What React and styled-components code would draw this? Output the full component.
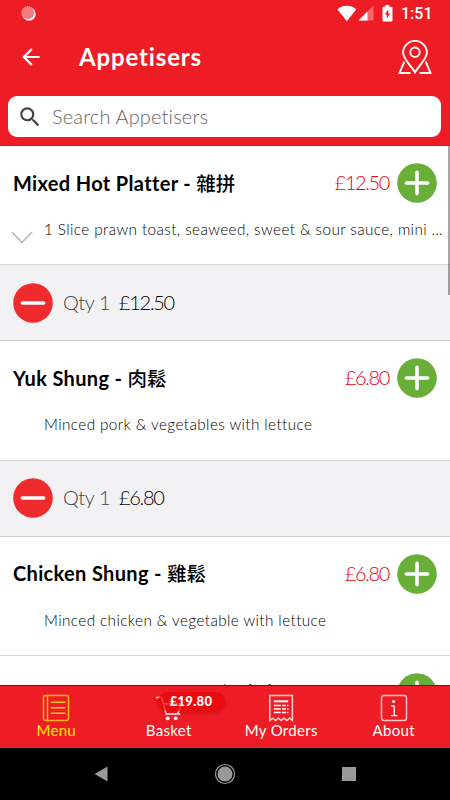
import React from 'react'
import styled, { createGlobalStyle } from 'styled-components'
import { MdArrowBack, MdSearch } from 'react-icons/md'

const GlobalStyle = createGlobalStyle`
  * {
    box-sizing: border-box;
  }
  body {
    margin: 0;
    background: #fff;
    font-family: Lato, 'Noto Sans CJK TC', sans-serif;
    overflow: hidden;
  }
  button {
    font: inherit;
    border: none;
    padding: 0;
    background: none;
    cursor: pointer;
  }
  svg {
    display: block;
    flex: none;
  }
`;

const Screen = styled.div`
  width: 450px;
  height: 800px;
  display: flex;
  flex-direction: column;
  overflow: hidden;
  color: #000;
`;

const Header = styled.header`
  flex: none;
  height: 146px;
  background: #ee1c25;
  border-bottom: 1px solid #f20d12;
  color: #fff;
`;

const StatusBar = styled.div`
  height: 27px;
  padding: 0 18px 0 21px;
  display: flex;
  align-items: center;
`;

const StatusIcons = styled.div`
  margin-left: auto;
  display: flex;
  align-items: center;
`;

const SignalGroup = styled.div`
  margin-right: 8px;
  display: flex;
`;

const Clock = styled.span`
  margin-left: 8px;
  width: 31px;
  font: 500 16px/27px Roboto, sans-serif;
  white-space: nowrap;
`;

const TitleBar = styled.div`
  height: 69px;
  padding: 0 18px 9px 18px;
  display: flex;
  align-items: center;
`;

const Title = styled.h1`
  margin: 0 auto 0 35px;
  font-size: 24px;
  font-weight: 700;
  line-height: 30px;
  letter-spacing: 0.85px;
`;

const SearchBox = styled.label`
  height: 41px;
  margin: 0 9px 0 8px;
  padding-left: 9px;
  border-radius: 9px;
  background: #fff;
  color: #444;
  display: flex;
  align-items: center;
`;

const SearchInput = styled.input`
  flex: 1;
  margin: 0 0 2px 9px;
  padding: 0;
  border: none;
  outline: none;
  background: none;
  font: 300 20px/26px Lato, sans-serif;
  letter-spacing: 0.15px;
  &::placeholder {
    color: #666;
    opacity: 1;
  }
`;

const List = styled.main`
  flex: 1;
  min-height: 0;
  overflow: hidden;
  position: relative;
  border-bottom: 1px solid #17343b;
`;

const ScrollThumb = styled.div`
  position: absolute;
  top: 0;
  right: 0;
  width: 2px;
  height: 149px;
  background: rgba(0, 0, 0, 0.35);
`;

const Dish = styled.section`
  height: 119.2px;
  border-bottom: 1px solid #d5d5d7;
  background: #fff;
`;

const DishTop = styled.div`
  height: 74px;
  padding: 0 13px;
  display: flex;
  align-items: center;
`;

const DishName = styled.h2`
  margin: 0 0 1px;
  font-size: 20px;
  font-weight: 700;
  line-height: 30px;
  white-space: nowrap;
  letter-spacing: ${p => p.$spacing}px;
`;

const Chinese = styled.span`
  font-family: 'Noto Sans CJK TC', sans-serif;
  font-size: 19.5px;
  font-weight: 500;
  letter-spacing: 0;
`;

const Price = styled.span`
  margin: 0 8px 2px auto;
  font-size: 20px;
  font-weight: 300;
  letter-spacing: -1.4px;
  color: #e8000b;
`;

const DishInfo = styled.div`
  height: 22px;
  padding: 0 0 0 11px;
  display: flex;
`;

const Toggle = styled.div`
  width: 33px;
  padding-top: 11px;
`;

const Description = styled.p`
  flex: 1;
  margin: -2px 0 0;
  font-size: 15.3px;
  font-weight: 300;
  line-height: 22px;
  white-space: nowrap;
  letter-spacing: ${p => p.$spacing}px;
`;

const QtyRow = styled.div`
  height: 76.3px;
  padding: 0 13px;
  background: #f2f2f4;
  border-bottom: 1px solid #d0d0d2;
  display: flex;
  align-items: center;
  font-size: 20px;
  font-weight: 300;
`;

const Qty = styled.span`
  margin: 0 0 2px 10px;
  width: 56px;
  color: #444;
  letter-spacing: -0.4px;
`;

const Amount = styled.span`
  margin-bottom: 2px;
  letter-spacing: -1.3px;
`;

const TabBar = styled.nav`
  flex: none;
  height: 62px;
  background: #ee1c25;
  display: grid;
  grid-template-columns: repeat(4, 1fr);
`;

const Tab = styled.button`
  position: relative;
  padding-top: 8px;
  display: flex;
  flex-direction: column;
  align-items: center;
  color: ${p => (p.$active ? '#ffe800' : '#fff')};
`;

const TabLabel = styled.span`
  margin-top: -2px;
  font-size: 15px;
  line-height: 20px;
  letter-spacing: 0.3px;
`;

const Total = styled.span`
  position: absolute;
  top: 6px;
  left: 45px;
  width: 67px;
  height: 19px;
  border-radius: 10px;
  background: rgba(232, 5, 10, 0.75);
  box-shadow: 0 2px 4px rgba(130, 0, 0, 0.3);
  color: #fff;
  font-size: 13px;
  font-weight: 900;
  line-height: 18px;
  text-align: center;
  letter-spacing: 0.3px;
`;

const SystemBar = styled.div`
  flex: none;
  height: 52px;
  padding-bottom: 1px;
  background: #000;
  display: flex;
  justify-content: center;
  align-items: center;
  gap: 106px;
`;

const SyncIcon = () => (
  <svg width="15" height="16" viewBox="0 0 15 16">
    <circle cx="8" cy="8" r="6.7" fill="#fff" />
    <circle cx="7" cy="6.8" r="6.3" fill="#f57a80" stroke="#fbc0c2" strokeDasharray="1 1" />
  </svg>
)

const WifiIcon = () => (
  <svg width="20" height="17" viewBox="0 0 20 17">
    <path d="M.3 4.2Q4.5.8 9.8.8t9.5 3.4L9.8 16.2z" fill="#fff" />
  </svg>
)

const SignalIcon = () => (
  <svg width="17" height="16" viewBox="-1 0 17 16">
    <path d="M.5 15.5 15.5.5v15z" fill="#f7656c" />
    <path d="M.5 15.5 9.5 6.5v9z" fill="#fff" />
  </svg>
)

const BatteryIcon = () => (
  <svg width="11" height="17" viewBox="0 0 11 17">
    <path d="M3.2 0h4v1.7h2.1q1.2 0 1.2 1.2v12.4q0 1.2-1.2 1.2H1.7q-1.2 0-1.2-1.2V2.9q0-1.2 1.2-1.2h1.5z" fill="#fff" />
    <path d="M6.3 4.3 2.8 9.4h2v4.1l3.4-5.1h-2z" fill="#ee1c25" />
  </svg>
)

const PinIcon = () => (
  <svg width="34" height="35" viewBox="0 0 34 35" fill="none" stroke="#fff" strokeWidth="1.9">
    <path d="M17 32.2C14.2 27 5.1 19.1 5.1 12.8a11.9 11.9 0 0 1 23.8 0C28.9 19.1 19.8 27 17 32.2z" />
    <circle cx="17" cy="12.2" r="4.7" />
    <path d="M6.3 21.7 1.5 33h11M27.7 21.7 32.5 33h-11" />
  </svg>
)

const RoundButton = ({ color, plus, label }) => (
  <button aria-label={label}>
    <svg width="40" height="40" viewBox="0 0 40 40">
      <circle cx="20" cy="20" r="19.8" fill={color} />
      <path
        d={plus ? 'M9.4 20h21.2M20 9.4v21.2' : 'M9.4 20h21.2'}
        stroke="#fff"
        strokeWidth="3.6"
        strokeLinecap="round"
      />
    </svg>
  </button>
)

const Chevron = () => (
  <svg width="22" height="13" viewBox="0 0 22 13" fill="none" stroke="#bbb" strokeWidth="1.8">
    <path d="M1 1 11 11.5 21 1" />
  </svg>
)

const MenuIcon = () => (
  <svg width="28" height="28" viewBox="0 0 28 28" fill="none" stroke="#ffb516" strokeWidth="1.5">
    <rect x="1.5" y="1.5" width="25" height="25" rx="2" />
    <path d="M5.5 1.5v25" />
    <path d="M9.3 8.3h13.6M9.3 13.8h13.6M9.3 19.3h13.6" stroke="#ffd000" strokeLinecap="round" />
  </svg>
)

const BasketIcon = () => (
  <svg width="28" height="28" viewBox="0 0 28 28" fill="none" stroke="#fff" strokeWidth="1.5">
    <path d="M1.2 3.5h5.6l4.4 16.6h14M8.5 9.8h17.9l-3.8 10.3" />
    <circle cx="12.7" cy="24.3" r="1.9" fill="#fff" stroke="none" />
    <circle cx="20.7" cy="24.3" r="1.9" fill="#fff" stroke="none" />
  </svg>
)

const OrdersIcon = () => (
  <svg width="28" height="28" viewBox="0 0 28 28" fill="none" stroke="#ffd0d0" strokeWidth="1.5">
    <path d="M2.8 26.5V1.5h22.6v25l-2.8-2.4-2.8 2.4-2.8-2.4-2.8 2.4-2.8-2.4-2.8 2.4-2.8-2.4z" />
    <path d="M6.8 7.3h14.4" stroke="#fff" strokeWidth="2" />
    <path d="M6.8 11.5h7M6.8 15h7M6.8 18.5h7M15 11.5h4M15 15h4M15 18.5h4M20 11.5h1.5M20 15h1.5M20 18.5h1.5" stroke="#fff" />
  </svg>
)

const AboutIcon = () => (
  <svg width="28" height="28" viewBox="0 0 28 28" fill="none" stroke="#ffc4c6" strokeWidth="1.5">
    <rect x="1.5" y="1.5" width="25" height="25" rx="2.5" />
    <circle cx="13.7" cy="7.5" r="1.5" fill="#fff" stroke="none" />
    <path d="M11.3 12h2.9v9.5M10.8 21.7h6.6" stroke="#fff" strokeWidth="1.3" />
  </svg>
)

const dishes = [
  {
    name: 'Mixed Hot Platter - ',
    chinese: '雜拼',
    price: '£12.50',
    info: '1 Slice prawn toast, seaweed, sweet & sour sauce, mini …',
    more: true,
    qty: 1,
    spacing: 0.34,
    infoSpacing: 0.4
  },
  {
    name: 'Yuk Shung - ',
    chinese: '肉鬆',
    price: '£6.80',
    info: 'Minced pork & vegetables with lettuce',
    qty: 1,
    spacing: 0.34,
    infoSpacing: 0.4
  },
  {
    name: 'Chicken Shung - ',
    chinese: '雞鬆',
    price: '£6.80',
    info: 'Minced chicken & vegetable with lettuce',
    spacing: 0.34,
    infoSpacing: 0.4
  },
  {
    name: 'Vegetarian Yuk Shung - ',
    chinese: '煙肉串',
    price: '£6.80',
    spacing: -0.1
  }
]

const tabs = [
  { label: 'Menu', icon: <MenuIcon />, active: true },
  { label: 'Basket', icon: <BasketIcon />, total: '£19.80' },
  { label: 'My Orders', icon: <OrdersIcon /> },
  { label: 'About', icon: <AboutIcon /> }
]

export default function App() {
  return (
    <Screen>
      <GlobalStyle />
      <Header>
        <StatusBar>
          <SyncIcon />
          <StatusIcons>
            <SignalGroup>
              <WifiIcon />
              <SignalIcon />
            </SignalGroup>
            <BatteryIcon />
            <Clock>1:51</Clock>
          </StatusIcons>
        </StatusBar>
        <TitleBar>
          <MdArrowBack size={26} />
          <Title>Appetisers</Title>
          <PinIcon />
        </TitleBar>
        <SearchBox>
          <MdSearch size={26} />
          <SearchInput placeholder="Search Appetisers" />
        </SearchBox>
      </Header>
      <List>
        {dishes.map(dish => (
          <React.Fragment key={dish.name}>
            <Dish>
              <DishTop>
                <DishName $spacing={dish.spacing}>
                  {dish.name}
                  <Chinese>{dish.chinese}</Chinese>
                </DishName>
                <Price>{dish.price}</Price>
                <RoundButton plus color="#68ae38" label="Add" />
              </DishTop>
              <DishInfo>
                <Toggle>{dish.more && <Chevron />}</Toggle>
                <Description $spacing={dish.infoSpacing}>{dish.info}</Description>
              </DishInfo>
            </Dish>
            {dish.qty && (
              <QtyRow>
                <RoundButton color="#f02b2e" label="Remove" />
                <Qty>Qty {dish.qty}</Qty>
                <Amount>{dish.price}</Amount>
              </QtyRow>
            )}
          </React.Fragment>
        ))}
        <ScrollThumb />
      </List>
      <TabBar>
        {tabs.map(tab => (
          <Tab key={tab.label} $active={tab.active}>
            {tab.icon}
            <TabLabel>{tab.label}</TabLabel>
            {tab.total && <Total>{tab.total}</Total>}
          </Tab>
        ))}
      </TabBar>
      <SystemBar>
        <svg width="14" height="16" viewBox="0 0 14 16">
          <path d="M.5 8 13.5.5v15z" fill="#999" />
        </svg>
        <svg width="22" height="22" viewBox="0 0 22 22">
          <circle cx="11" cy="11" r="9.5" fill="none" stroke="#999" strokeWidth="1.2" />
          <circle cx="11" cy="11" r="7.5" fill="#999" />
        </svg>
        <svg width="14" height="14" viewBox="0 0 14 14">
          <rect width="14" height="14" fill="#999" />
        </svg>
      </SystemBar>
    </Screen>
  )
}
